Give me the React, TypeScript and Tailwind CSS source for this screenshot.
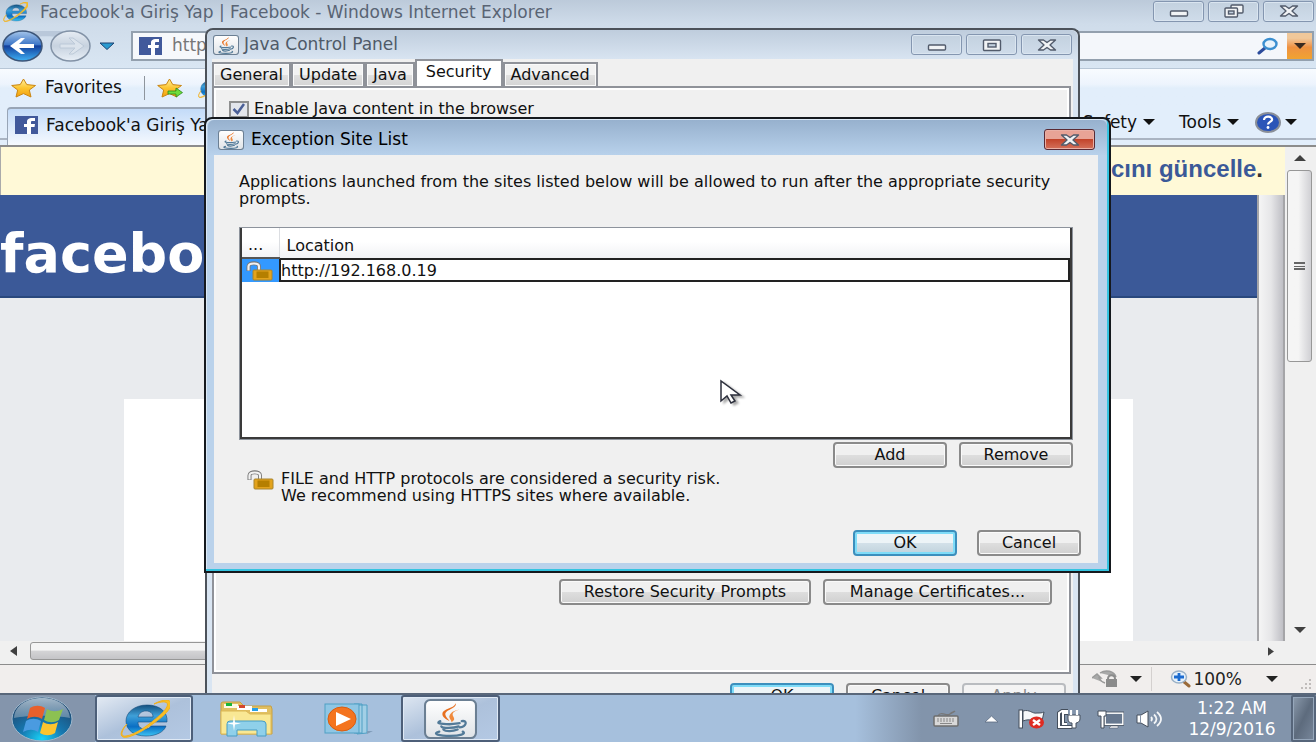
import type { ReactNode } from 'react';
import clsx from 'clsx';

const tabs = ['General', 'Update', 'Java', 'Security', 'Advanced'];

function IeLogo({ className }: { className?: string }) {
    return (
        <svg className={className} viewBox="0 0 52 38" preserveAspectRatio="none" aria-hidden="true">
            <defs>
                <linearGradient id="ieBlue" x1="0" y1="0" x2="0" y2="1">
                    <stop offset="0" stopColor="#15507f" />
                    <stop offset="0.35" stopColor="#3fa0d8" />
                    <stop offset="0.7" stopColor="#0a6fc4" />
                    <stop offset="1" stopColor="#3cc4f4" />
                </linearGradient>
            </defs>
            <path
                d="M49 22H20c0 5 3 7 7 7 3 0 5-1 6-3h15c-2 6-10 10-20 10C16 36 8 30 8 21S17 5 29 5c13 0 21 7 20 17zM20 17h15c0-4-3-6-7-6s-7 2-8 6z"
                fill="url(#ieBlue)"
                stroke="#154c7c"
                strokeWidth="0.6"
            />
            <path
                d="M9 24C3 31 2 37 8 36c9-1 24-12 33-20 6-5 10-11 8-13-2-2-8-1-13 1 9-5 16-5 17-1 1 5-7 13-17 20C24 32 10 39 5 37c-4-2-1-8 4-13z"
                fill="#fbbf24"
                stroke="#f0b020"
                strokeWidth="1"
            />
        </svg>
    );
}

function JavaIcon({ className }: { className?: string }) {
    return (
        <svg className={className} viewBox="0 0 52 38" preserveAspectRatio="none" aria-hidden="true">
            <defs>
                <linearGradient id="javaTile" x1="0" y1="0" x2="0" y2="1">
                    <stop offset="0" stopColor="#ffffff" />
                    <stop offset="1" stopColor="#dfe3e7" />
                </linearGradient>
            </defs>
            <rect x="1" y="1" width="50" height="36" rx="5" fill="url(#javaTile)" stroke="#6b7f93" strokeWidth="2" />
            <path d="M31 4c2 5-11 6-10 11 0 2 3 4 4 6-4-2-7-4-7-7 0-5 12-5 13-10z" fill="#e76f1f" />
            <path d="M35 10c-7 2-8 4-6 7 1 2 1 3-2 5 0-2-3-4-2-6 1-3 4-5 10-6z" fill="#f08a3c" />
            <g fill="none" stroke="#527a98" strokeWidth="2.200" strokeLinecap="round">
                <path d="M16 21c-5 2 0 3 9 3 5 0 9-1 10-1" />
                <path d="M17 26c1 2 12 2 17 0" />
                <path d="M19 29c2 2 9 2 14 0" />
                <path d="M37 21c6-1 5 5-2 6" />
                <path d="M15 31c-8 2 0 4 11 4 9 0 16-2 12-4" />
            </g>
        </svg>
    );
}

function FacebookIcon() {
    return (
        <svg className="w-[23px] h-[18px] shrink-0" viewBox="0 0 23 18" aria-hidden="true">
            <rect width="23" height="18" fill="#41599b" />
            <path d="M12 18v-7H9V8h3V6c0-3 2-4 5-4h3v3h-2c-2 0-2 .4-2 1.400V8h4l-.5 3H16v7z" fill="#fff" />
        </svg>
    );
}

function StarIcon({ arrow }: { arrow?: boolean }) {
    return (
        <svg className="w-[26px] h-5 shrink-0" viewBox="0 0 26 20" aria-hidden="true">
            <defs>
                <linearGradient id="gold" x1="0" y1="0" x2="0" y2="1">
                    <stop offset="0" stopColor="#fff0a0" />
                    <stop offset="0.5" stopColor="#fcc530" />
                    <stop offset="1" stopColor="#f29f0d" />
                </linearGradient>
            </defs>
            <path
                d="M12.500 1l3.300 5.600 8.700.9-6.200 4.500 1.700 7-7.500-3.400L5 19l1.700-7L.7 7.500l8.500-.9z"
                fill="url(#gold)"
                stroke="#c98512"
                strokeWidth="1"
                strokeLinejoin="round"
            />
            {arrow && <path d="M11 13h8v-3l6.500 4.600L19 19v-3h-8z" fill="#6fdd3c" stroke="#2c8a1d" strokeWidth="0.8" />}
        </svg>
    );
}

function UnlockIcon() {
    return (
        <svg className="w-7 h-5 shrink-0" viewBox="0 0 28 20" aria-hidden="true">
            <path d="M2.500 10V5.500c0-4.500 10.500-4.500 10.500 0V10" fill="none" stroke="#777" strokeWidth="4" />
            <path d="M2.500 9.400V5.500c0-4 10.500-4 10.500 0V10" fill="none" stroke="#f2f2f2" strokeWidth="2.200" />
            <rect x="7" y="9" width="19" height="10" rx="1" fill="#e3a31c" stroke="#a8842e" />
            <rect x="10.500" y="10.500" width="12" height="6.500" fill="#b57f00" />
        </svg>
    );
}

function Caret({ className }: { className?: string }) {
    return (
        <svg className={clsx('w-3 h-[6px] shrink-0', className)} viewBox="0 0 12 6" aria-hidden="true">
            <path d="M0 0h12L6 6z" fill="currentColor" />
        </svg>
    );
}

type Glyph = 'minimize' | 'restore' | 'maximize' | 'close';

function CaptionButton({ glyph, className }: { glyph: Glyph; className?: string }) {
    return (
        <button
            aria-label={glyph}
            className={clsx(
                'flex items-center justify-center w-[51px] h-[21px] rounded-[3px] border',
                className ?? 'border-[#8496b0] bg-linear-to-b from-[#c3d1df] to-[#cfdcea] shadow-[inset_0_0_0_1px_#dae5f0]'
            )}
        >
            <svg className="w-[22px] h-[14px]" viewBox="0 0 22 14" fill="#f1f3f5" stroke="#525b6b" strokeWidth="1.400">
                {glyph === 'minimize' && <rect x="2.500" y="7" width="17" height="5" rx="1" />}
                {glyph === 'maximize' && (
                    <>
                        <rect x="2.500" y="2" width="17" height="10.500" rx="1" />
                        <rect x="7" y="5.500" width="8" height="3.500" fill="#c3d1df" />
                    </>
                )}
                {glyph === 'restore' && (
                    <>
                        <rect x="8" y="1" width="12" height="8" rx="1" />
                        <rect x="2" y="4" width="12.500" height="9" rx="1" />
                        <rect x="5.500" y="7" width="5.500" height="3" fill="#c3d1df" />
                    </>
                )}
                {glyph === 'close' && (
                    <path d="M2.500 2h5L11 4.500 14.500 2h5l-5.500 5 5.500 5h-5L11 9.500 7.500 12h-5L8 7z" strokeLinejoin="round" />
                )}
            </svg>
        </button>
    );
}

function PushButton({ children, className, primary, disabled }: {
    children: ReactNode;
    className?: string;
    primary?: boolean;
    disabled?: boolean;
}) {
    return (
        <button
            disabled={disabled}
            className={clsx(
                'h-[26px] shrink-0 flex items-center justify-center rounded-[4px] border-2 text-base leading-none',
                primary && 'border-[#3c8fbd] shadow-[inset_0_0_0_2px_#7fdcf8] bg-linear-to-b from-[#edf4f7] from-50% via-[#d3e1e9] via-50% to-[#c0d2dc]',
                disabled && 'border-[#b9bcc0] text-[#8a8a8a] bg-[#f4f4f4]',
                !primary && !disabled && 'border-[#8a8a8a] shadow-[inset_0_0_0_1px_#fafafa] bg-linear-to-b from-[#f0f0f0] from-50% via-[#dedede] via-50% to-[#d0d0d0]',
                className
            )}
        >
            {children}
        </button>
    );
}

function Browser() {
    return (
        <div className="h-full flex flex-col bg-[#d5e2ef]">
            <div className="h-6 shrink-0 flex items-center pl-[2px] pr-[2px] bg-linear-to-b from-[#bccada] to-[#cfdcea]">
                <IeLogo className="w-[26px] h-5 shrink-0" />
                <span className="ml-3 flex-1 text-[17px] leading-6 text-[#596474] whitespace-nowrap">
                    Facebook'a Giriş Yap | Facebook - Windows Internet Explorer
                </span>
                <div className="flex gap-1 pb-[2px]">
                    <CaptionButton glyph="minimize" />
                    <CaptionButton glyph="restore" />
                    <CaptionButton glyph="close" />
                </div>
            </div>

            <div className="h-[45px] shrink-0 flex items-center pl-[2px] pr-[2px] border-b border-[#b7c6d6] bg-linear-to-b from-[#cfdcea] to-[#d9e6f3]">
                <svg className="w-[90px] h-8 shrink-0" viewBox="0 0 90 32" aria-hidden="true">
                    <defs>
                        <linearGradient id="navBack" x1="0" y1="0" x2="0" y2="1">
                            <stop offset="0" stopColor="#a6c6ea" />
                            <stop offset="0.45" stopColor="#3e77c8" />
                            <stop offset="0.5" stopColor="#123f9c" />
                            <stop offset="1" stopColor="#3fb2f5" />
                        </linearGradient>
                        <linearGradient id="navNext" x1="0" y1="0" x2="0" y2="1">
                            <stop offset="0" stopColor="#e7edf4" />
                            <stop offset="0.5" stopColor="#c7d2df" />
                            <stop offset="1" stopColor="#e8eff7" />
                        </linearGradient>
                    </defs>
                    <path d="M20 1h48v9c-12-5-36-5-48 0z" fill="#b9c8da" />
                    <ellipse cx="20.500" cy="16" rx="19.500" ry="15" fill="url(#navBack)" stroke="#3c5578" strokeWidth="1.500" />
                    <path d="M8 16l11-8h4l-6 6h15v4H17l6 6h-4z" fill="#fff" />
                    <ellipse cx="68.500" cy="16" rx="19.500" ry="15" fill="url(#navNext)" stroke="#8292a6" strokeWidth="1.500" />
                    <path d="M82 16l-11-8h-4l6 6H58v4h15l-6 6h4z" fill="#dbe3ec" stroke="#bcc9d8" />
                </svg>
                <svg className="ml-[7px] w-4 h-2 shrink-0" viewBox="0 0 16 8" aria-hidden="true">
                    <path d="M1 1h14L8 7.500z" fill="#2a9bd0" stroke="#1d4272" />
                </svg>
                <label className="ml-4 flex-1 h-[30px] flex items-center pl-[6px] bg-[#f6f8fb] border-2 border-[#93a0ae]">
                    <FacebookIcon />
                    <input
                        aria-label="Address"
                        defaultValue="https://www.facebook.com/"
                        className="ml-[10px] flex-1 min-w-0 bg-transparent outline-none text-[17px] text-[#777]"
                    />
                </label>
                <div className="ml-2 w-64 h-[30px] flex items-center bg-[#f4f7fb] border-2 border-[#93a0ae]">
                    <input aria-label="Search" className="flex-1 min-w-0 bg-transparent outline-none" />
                    <svg className="w-[22px] h-[18px] mr-2" viewBox="0 0 22 18" fill="none" aria-hidden="true">
                        <path d="M8 11l-6 5" stroke="#2c4c9c" strokeWidth="3" strokeLinecap="round" />
                        <ellipse cx="13" cy="7" rx="6.500" ry="5" stroke="#3b8fd0" strokeWidth="2.400" fill="#e8f3fc" />
                    </svg>
                    <button
                        aria-label="Search options"
                        className="w-[25px] h-full flex items-center justify-center bg-linear-to-b from-[#f0c89a] from-20% via-[#ee9140] via-55% to-[#f0a330] text-[#3a2a20]"
                    >
                        <Caret />
                    </button>
                </div>
            </div>

            <div className="h-[38px] shrink-0 flex items-center pl-[11px] bg-linear-to-b from-[#f8fbff] via-[#edf4fd] via-40% to-[#e2eefb] to-50%">
                <StarIcon />
                <span className="ml-2 w-[99px] text-[17px]">Favorites</span>
                <span className="w-px h-6 bg-[#8e959d]" />
                <span className="ml-3">
                    <StarIcon arrow />
                </span>
                <IeLogo className="ml-[14px] w-6 h-5" />
            </div>

            <div className="h-[38px] shrink-0 flex items-stretch bg-[#e2eefb]">
                <span className="w-[7px] h-[33px] border-b-2 border-[#aab4c2]" />
                <div className="w-[420px] flex items-center pl-[7px] pb-1 rounded-t-[4px] border-t-2 border-x border-[#98a5b6] bg-linear-to-b from-[#c3dbf8] to-[#f5f9fe]">
                    <FacebookIcon />
                    <span className="ml-2 text-[17px] leading-6">Facebook'a Giriş Yap | Facebook</span>
                </div>
                <div className="flex-1 h-[33px] flex items-start justify-end gap-6 pr-[19px] pt-[3px] border-b-2 border-[#aab4c2] text-[17px] leading-6">
                    <button className="flex items-center gap-[6px]">Safety <Caret /></button>
                    <button className="flex items-center gap-[6px]">Tools <Caret /></button>
                    <button aria-label="Help" className="-ml-2 flex items-center gap-1 h-6">
                        <svg className="w-[26px] h-[21px]" viewBox="0 0 26 21" aria-hidden="true">
                            <ellipse cx="13" cy="10.500" rx="12" ry="9.500" fill="#2b55b8" stroke="#8a8f98" strokeWidth="2" />
                            <path d="M9 8c0-5 9-4 8 0-1 2-4 2-4 4.500" fill="none" stroke="#fff" strokeWidth="2.200" />
                            <circle cx="13" cy="15.500" r="1.400" fill="#fff" />
                        </svg>
                        <Caret />
                    </button>
                </div>
            </div>

            <div className="flex-1 min-h-0 flex border-t-2 border-[#8c8c8c]">
                <div className="flex-1 flex flex-col">
                    <div className="h-12 shrink-0 flex items-center justify-end pr-[22px] pb-1 bg-[#fff9d7] border-l border-[#aaa]">
                        <a href="#update" className="font-['Liberation_Sans',sans-serif] font-bold text-2xl leading-6 text-[#3b5998]">
                            Tarayıcını güncelle<span className="text-[#333]">.</span>
                        </a>
                    </div>
                    <div className="flex-1 min-h-0 flex">
                        <div className="flex-1 flex flex-col bg-[#e9ebee]">
                            <div className="h-[103px] shrink-0 flex items-center bg-[#3b5998] border-b-2 border-[#29487d]">
                                <h1 className="pt-4 font-bold text-[54px] leading-none text-white">facebook</h1>
                            </div>
                            <div className="mt-[101px] mx-[124px] flex-1 bg-white" />
                        </div>
                        <div className="w-7 border-x-2 border-[#a5a5a8] bg-linear-to-r from-[#f5f5f5] via-[#e6e6e8] via-50% to-[#bfbfc5]" />
                    </div>
                </div>
                <div className="w-[31px] flex flex-col items-center pr-[2px] bg-[#f0f0f0] text-[#404040] py-2">
                    <Caret className="rotate-180" />
                    <div className="mt-[9px] w-[25px] h-[192px] flex items-center justify-center rounded-[3px] border border-[#979797] bg-linear-to-r from-[#f5f5f5] from-45% to-[#d0d0d4]">
                        <span className="w-[11px] h-2 border-y-2 border-[#666] flex items-center">
                            <span className="w-full h-px bg-[#666]" />
                        </span>
                    </div>
                    <Caret className="mt-auto" />
                </div>
            </div>

            <div className="h-[23px] shrink-0 flex items-center pl-[10px] pr-[42px] pb-[3px] bg-[#f0f0f0] text-[#404040]">
                <svg className="w-[7px] h-[10px]" viewBox="0 0 7 10" aria-hidden="true">
                    <path d="M7 0v10L0 5z" fill="currentColor" />
                </svg>
                <div className="ml-[13px] w-[700px] h-[18px] rounded-[3px] border border-[#979797] bg-linear-to-b from-[#f4f4f4] from-45% via-[#d4d4d6] via-50% to-[#c4c4c7]" />
                <svg className="ml-auto w-[6px] h-[9px]" viewBox="0 0 7 10" aria-hidden="true">
                    <path d="M0 0v10l7-5z" fill="currentColor" />
                </svg>
            </div>

            <div className="h-[29px] shrink-0 flex items-center justify-end pr-1 border-t border-[#8c8c8c] bg-[#f1eeed] text-[#222]">
                <svg className="w-[26px] h-5" viewBox="0 0 26 20" aria-hidden="true">
                    <path d="M0 9l5-4 4 4H7c1 2 3 4 6 5M8 4c6-4 14-2 16 4" fill="#a9a9a9" stroke="#9a9a9a" strokeWidth="1.500" />
                    <rect x="14" y="10" width="11" height="8" fill="#8b8b8b" />
                    <path d="M16 10c0-5 7-5 7 0" fill="none" stroke="#8b8b8b" strokeWidth="2" />
                </svg>
                <Caret className="ml-3" />
                <span className="ml-[9px] w-px h-6 bg-[#d4d0cf]" />
                <svg className="ml-[18px] w-[22px] h-[18px]" viewBox="0 0 22 18" aria-hidden="true">
                    <path d="M13 11l6 5" stroke="#9a6a3a" strokeWidth="3" strokeLinecap="round" />
                    <ellipse cx="9" cy="7" rx="7.500" ry="6" fill="#e6f1fb" stroke="#9ab0c6" strokeWidth="1.500" />
                    <path d="M4 7h10M9 3v8" stroke="#1c6bd0" strokeWidth="2.800" />
                </svg>
                <button className="ml-[1px] flex items-center gap-6 text-[17px] leading-6">100% <Caret /></button>
                <svg className="ml-[22px] mt-3 w-3 h-3" viewBox="0 0 12 12" fill="#c0bcbb" aria-hidden="true">
                    <path d="M9 0h2v2H9zM9 4h2v2H9zM9 8h2v2H9zM5 4h2v2H5zM5 8h2v2H5zM1 8h2v2H1z" />
                </svg>
            </div>
        </div>
    );
}

function ControlPanel() {
    return (
        <section className="absolute left-[205px] top-[28px] -bottom-6 w-[875px] flex flex-col px-[5px] pb-2 rounded-t-lg border-2 border-b-0 border-[#4c525a] bg-[#d9e5f2]">
            <header className="h-[29px] shrink-0 flex items-center gap-[5px] pl-1 -mx-[5px] pr-[6px] rounded-t-lg bg-linear-to-b from-[#bfcddd] to-[#d8e4f1]">
                <JavaIcon className="ml-[2px] w-[26px] h-[20px]" />
                <h2 className="flex-1 text-[17px] text-[#4f5a68]">Java Control Panel</h2>
                <div className="flex gap-1">
                    <CaptionButton glyph="minimize" />
                    <CaptionButton glyph="maximize" />
                    <CaptionButton glyph="close" />
                </div>
            </header>
            <div className="flex-1 min-h-0 flex flex-col bg-[#f0f0f0]">
                <div role="tablist" className="h-[27px] shrink-0 flex items-end text-base leading-5">
                    {tabs.map((tab) => (
                        <button
                            key={tab}
                            role="tab"
                            aria-selected={tab === 'Security'}
                            className={clsx(
                                'border-2 border-b-0 border-[#8f9299]',
                                tab === 'Security'
                                    ? 'px-[9px] h-[27px] pb-1 bg-white'
                                    : 'px-[6px] h-6 bg-linear-to-b from-[#f2f2f2] from-50% via-[#e0e0e0] via-50% to-[#d4d4d4] shadow-[inset_0_0_0_1px_#fafafa]'
                            )}
                        >
                            {tab}
                        </button>
                    ))}
                </div>
                <div className="flex-1 min-h-0 flex flex-col justify-between mr-[2px] pt-[9px] pl-[15px] pr-[17px] pb-[67px] border-2 border-[#8f9299] shadow-[inset_0_0_0_2px_#fff]">
                    <label className="flex items-center gap-[5px] text-base leading-6">
                        <input type="checkbox" defaultChecked className="peer sr-only" />
                        <span className="w-[20px] h-[17px] flex items-center justify-center border-2 border-[#8e8f8f] bg-[#e3e6ec]">
                            <svg className="w-[14px] h-3" viewBox="0 0 14 12" aria-hidden="true">
                                <path d="M1.500 6l4 4L12 1" fill="none" stroke="#4a5f97" strokeWidth="2.500" />
                            </svg>
                        </span>
                        Enable Java content in the browser
                    </label>
                    <div className="flex justify-end gap-3">
                        <PushButton className="w-[252px]">Restore Security Prompts</PushButton>
                        <PushButton className="w-[229px]">Manage Certificates...</PushButton>
                    </div>
                </div>
                <div className="shrink-0 flex justify-end gap-3 pt-[9px] pr-[7px]">
                    <PushButton primary className="w-[104px]">OK</PushButton>
                    <PushButton className="w-[104px]">Cancel</PushButton>
                    <PushButton disabled className="w-[104px]">Apply</PushButton>
                </div>
            </div>
        </section>
    );
}

function ExceptionDialog() {
    return (
        <section
            role="dialog"
            aria-labelledby="exception-title"
            className="absolute left-[204px] top-[117px] w-[907px] pl-2 pr-[11px] pb-2 rounded-t-lg border-2 border-[#15191e] bg-[#bad2eb] shadow-[inset_-2px_-2px_0_#35c4e0,inset_1px_1px_0_#dce9f6]"
        >
            <header className="h-[35px] -ml-[6px] -mr-[9px] mt-px flex items-center gap-[7px] pt-1 pl-[10px] pr-3 rounded-t-md bg-linear-to-b from-[#97b1ce] to-[#b8d1eb]">
                <JavaIcon className="w-[26px] h-[20px]" />
                <h2 id="exception-title" className="flex-1 text-[17px] text-black">Exception Site List</h2>
                <CaptionButton
                    glyph="close"
                    className="border-[#5a2a34] bg-linear-to-b from-[#e8a396] from-45% via-[#c2442b] via-50% to-[#d4705a] shadow-[inset_0_0_0_1px_#e9b0a6]"
                />
            </header>
            <div className="pt-[18px] pl-[25px] pr-[25px] pb-[7px] bg-[#f0f0f0] text-base leading-[17px]">
                <p>
                    Applications launched from the sites listed below will be allowed to run after the appropriate security prompts.
                </p>
                <div className="mt-5 h-[213px] bg-white border border-[#8d939c]">
                    <div className="h-full border-2 border-t-0 border-[#3a3a3a]">
                        <table className="w-full table-fixed border-collapse">
                            <thead>
                                <tr className="h-[30px] bg-linear-to-b from-white from-45% to-[#f1f2f5]">
                                    <th className="w-[37px] text-left font-normal pl-[6px] pt-1 border-r border-[#dcdee2]">...</th>
                                    <th className="text-left font-normal pl-[7px] pt-1">Location</th>
                                </tr>
                            </thead>
                            <tbody>
                                <tr>
                                    <td className="bg-[#3399ff] border-t-2 border-[#555] p-0 pl-1">
                                        <UnlockIcon />
                                    </td>
                                    <td className="p-0">
                                        <input
                                            aria-label="Location"
                                            defaultValue="http://192.168.0.19"
                                            className="block w-full h-6 bg-white border-2 border-[#222] outline-none"
                                        />
                                    </td>
                                </tr>
                            </tbody>
                        </table>
                    </div>
                </div>
                <div className="mt-[2px] flex justify-end gap-3">
                    <PushButton className="w-[114px]">Add</PushButton>
                    <PushButton className="w-[114px]">Remove</PushButton>
                </div>
                <div className="mt-[2px] flex gap-[6px] pl-2">
                    <UnlockIcon />
                    <p>
                        FILE and HTTP protocols are considered a security risk.
                        <br />
                        We recommend using HTTPS sites where available.
                    </p>
                </div>
                <div className="mt-[26px] -mr-2 flex justify-end gap-5">
                    <PushButton primary className="w-[104px]">OK</PushButton>
                    <PushButton className="w-[104px]">Cancel</PushButton>
                </div>
            </div>
        </section>
    );
}

function StartOrb() {
    return (
        <svg className="w-[62px] h-[46px]" viewBox="0 0 62 46" aria-hidden="true">
            <defs>
                <radialGradient id="orb" cx="0.5" cy="0.95" r="0.8">
                    <stop offset="0" stopColor="#19d3f7" />
                    <stop offset="0.45" stopColor="#1678b0" />
                    <stop offset="1" stopColor="#1f4a73" />
                </radialGradient>
                <linearGradient id="orbShine" x1="0" y1="0" x2="0" y2="1">
                    <stop offset="0" stopColor="#c4d4e0" stopOpacity="0.8" />
                    <stop offset="1" stopColor="#8aa5ba" stopOpacity="0.6" />
                </linearGradient>
            </defs>
            <ellipse cx="31" cy="23" rx="30" ry="22" fill="url(#orb)" stroke="#9fb8cc" />
            <path d="M3 22C4 9 16 2 31 2s27 7 28 20c-14-3-42-3-56 0z" fill="url(#orbShine)" />
            <path d="M19 12c5-3 10-3 15 0l-3 11c-5-3-10-3-15 0z" fill="#e8602c" />
            <path d="M36 13c5 3 10 3 16 0l-4 11c-5 3-10 3-15 0z" fill="#8cc152" />
            <path d="M15 25c5-3 10-3 15 0l-3 11c-5-3-9-3-15 0z" fill="#4a9be0" />
            <path d="M32 26c5 3 10 3 15 0l-3 11c-5 3-10 3-15 0z" fill="#fcc42e" />
        </svg>
    );
}

function FolderIcon() {
    return (
        <svg className="w-[54px] h-[38px]" viewBox="0 0 54 38" aria-hidden="true">
            <path d="M2 34V4q0-2 2-2h17l4 4h27l1 3v25z" fill="#e0bf62" stroke="#c8a040" />
            <path d="M5 4h14v4H5z" fill="#fdf8e4" />
            <rect x="7" y="3" width="6" height="3" fill="#18b53a" />
            <path d="M18 6h15v4H18z" fill="#fff" />
            <rect x="20" y="5" width="6" height="3" fill="#d4472c" />
            <path d="M31 9h17v3H31z" fill="#fff" />
            <rect x="33" y="8" width="6" height="3" fill="#259fe8" />
            <path d="M2 11h25l4 3h21v20H2z" fill="#f9e894" stroke="#dcb855" />
            <path d="M8 36V24q0-3 3-3h32q4 0 4 3v12h-9v-6H18v6z" fill="#8fd0ea" stroke="#469dc4" />
            <path d="M15 15l1 7.500 6 1-6 1-1 6.500-1-6.500-6-1 6-1z" fill="#fff" />
        </svg>
    );
}

function MediaIcon() {
    return (
        <svg className="w-[50px] h-8" viewBox="0 0 50 32" aria-hidden="true">
            <path d="M33 2h10v28l-10 1zM30 1h8v29h-8z" fill="#a2cfe6" stroke="#4f9fc4" />
            <path d="M43 28h6l-6 3z" fill="#7f9cb9" />
            <rect x="1" y="1" width="34" height="29" fill="#8fc6e4" stroke="#4f9fc4" />
            <ellipse cx="18" cy="16" rx="14" ry="12" fill="#f4741f" stroke="#d95d10" />
            <path d="M12 9l15 7-15 7z" fill="#fff" />
        </svg>
    );
}

function Taskbar() {
    return (
        <footer className="relative h-[49px] shrink-0 flex items-stretch border-t-2 border-[#59677a] bg-linear-to-r from-[#a6c0dd] from-65% to-[#8294ab] to-70% text-white">
            <button aria-label="Start" className="w-[95px] shrink-0 flex items-center pl-[11px] bg-[#8495ac]">
                <StartOrb />
            </button>
            <button
                aria-label="Internet Explorer"
                className="w-[98px] flex items-center justify-center rounded-[3px] border-2 border-[#4d5f79] bg-linear-to-br from-[#e3eaf3] via-[#adc1db] via-50% to-[#b4c9e4] shadow-[inset_0_0_0_1px_#dfe9f5]"
            >
                <IeLogo className="w-[52px] h-[38px]" />
            </button>
            <button aria-label="Windows Explorer" className="ml-[26px] flex items-center">
                <FolderIcon />
            </button>
            <button aria-label="Media Player" className="ml-[51px] flex items-center">
                <MediaIcon />
            </button>
            <button
                aria-label="Java"
                className="ml-[27px] w-[99px] flex items-center justify-center rounded-[3px] border-2 border-[#4d5f79] bg-linear-to-br from-[#dde6f1] via-[#adc1db] via-50% to-[#b4c9e4] shadow-[inset_0_0_0_1px_#dfe9f5]"
            >
                <JavaIcon className="w-[53px] h-[40px]" />
            </button>

            <div className="ml-auto flex items-center">
                <svg className="w-[26px] h-[18px]" viewBox="0 0 26 18" aria-hidden="true">
                    <path d="M5 6c3-6 8 1 12-2 2-2 4-2 5-3" fill="none" stroke="#777" strokeWidth="1.500" />
                    <rect x="1" y="6" width="24" height="10" rx="1" fill="#d8d8d8" stroke="#6e6e6e" strokeWidth="1.500" />
                    <path d="M4 9h18M4 11h18" stroke="#888" strokeWidth="1" strokeDasharray="2 1" />
                    <path d="M7 13.500h12" stroke="#888" strokeWidth="1" />
                </svg>
                <svg className="ml-[25px] w-[15px] h-2" viewBox="0 0 15 8" aria-hidden="true">
                    <path d="M1 7l6.500-6L14 7z" fill="#fff" stroke="#5b6b80" strokeWidth="0.8" />
                </svg>
                <svg className="ml-[19px] w-[27px] h-5" viewBox="0 0 27 20" aria-hidden="true">
                    <rect x="1" y="1" width="3.500" height="18" fill="#fff" stroke="#444e5c" />
                    <path d="M5 2c7-2 9 3 14 2 3 0 5 0 7-1l-2 9c-7 1-12-3-19 0z" fill="#f7f8f9" stroke="#444e5c" />
                    <ellipse cx="18.500" cy="13.500" rx="7.500" ry="6" fill="#de2b22" />
                    <path d="M15 11l7 5M22 11l-7 5" stroke="#fff" strokeWidth="2.400" />
                </svg>
                <svg className="ml-3 w-[25px] h-5" viewBox="0 0 25 20" fill="none" aria-hidden="true">
                    <path d="M11 2H5L2 4v14h13M11 4H6v11h4" stroke="#444e5c" strokeWidth="4" />
                    <path d="M11 2H5L2 4v14h13M11 4H6v11h4" stroke="#fff" strokeWidth="2" />
                    <path d="M11 6h12v4c0 3-3 4-4 4v5h-4v-5c-2 0-4-1-4-4z" fill="#fff" stroke="#444e5c" />
                    <path d="M14 6V1M20 6V1" stroke="#fff" strokeWidth="2.200" />
                </svg>
                <svg className="ml-[15px] w-[27px] h-5" viewBox="0 0 27 20" aria-hidden="true">
                    <rect x="8" y="4" width="18" height="11.500" fill="#67788f" stroke="#fff" strokeWidth="1.800" />
                    <rect x="7" y="3" width="20" height="13.500" fill="none" stroke="#444e5c" strokeWidth="0.8" />
                    <path d="M14 17h7v2h-9z" fill="#fff" stroke="#444e5c" strokeWidth="0.5" />
                    <path d="M1 2h8v5H7v12H4V7H1z" fill="#fff" stroke="#444e5c" />
                </svg>
                <svg className="ml-3 w-[27px] h-[18px]" viewBox="0 0 27 18" fill="none" aria-hidden="true">
                    <path d="M1 5h4l7-4v16l-7-4H1z" fill="#fff" stroke="#444e5c" />
                    <path d="M4.500 5v8" stroke="#8794a8" />
                    <path d="M15 7q2 2 0 4M18 4.500q5 4.500 0 9M21 2q8 7 0 14" stroke="#f4f6f8" strokeWidth="1.800" />
                </svg>
                <time dateTime="2016-12-09T01:22" className="ml-6 w-[90px] text-center text-[17px] leading-[21px]">
                    1:22 AM
                    <br />
                    12/9/2016
                </time>
                <button
                    aria-label="Show desktop"
                    className="ml-[14px] w-[25px] h-full rounded-[2px] border-2 border-[#56657a] bg-linear-to-br from-[#8c9bad] via-[#5d6b7d] via-50% to-[#78879b] shadow-[inset_0_0_0_1px_#96a7bb]"
                />
            </div>
        </footer>
    );
}

export default function App() {
    return (
        <div className="h-screen flex flex-col overflow-hidden font-['DejaVu_Sans',sans-serif] text-[#111]">
            <main className="relative flex-1 min-h-0 overflow-hidden">
                <Browser />
                <ControlPanel />
                <ExceptionDialog />
                <svg className="absolute left-[719px] top-[379px] w-7 h-8 drop-shadow-[3px_2px_1px_#00000055]" viewBox="0 0 28 32" aria-hidden="true">
                    <path d="M2 2v20l6-5 4 7 4-2-4-6h9z" fill="#fff" stroke="#2c2f3c" strokeWidth="1.500" />
                </svg>
            </main>
            <Taskbar />
        </div>
    );
}
